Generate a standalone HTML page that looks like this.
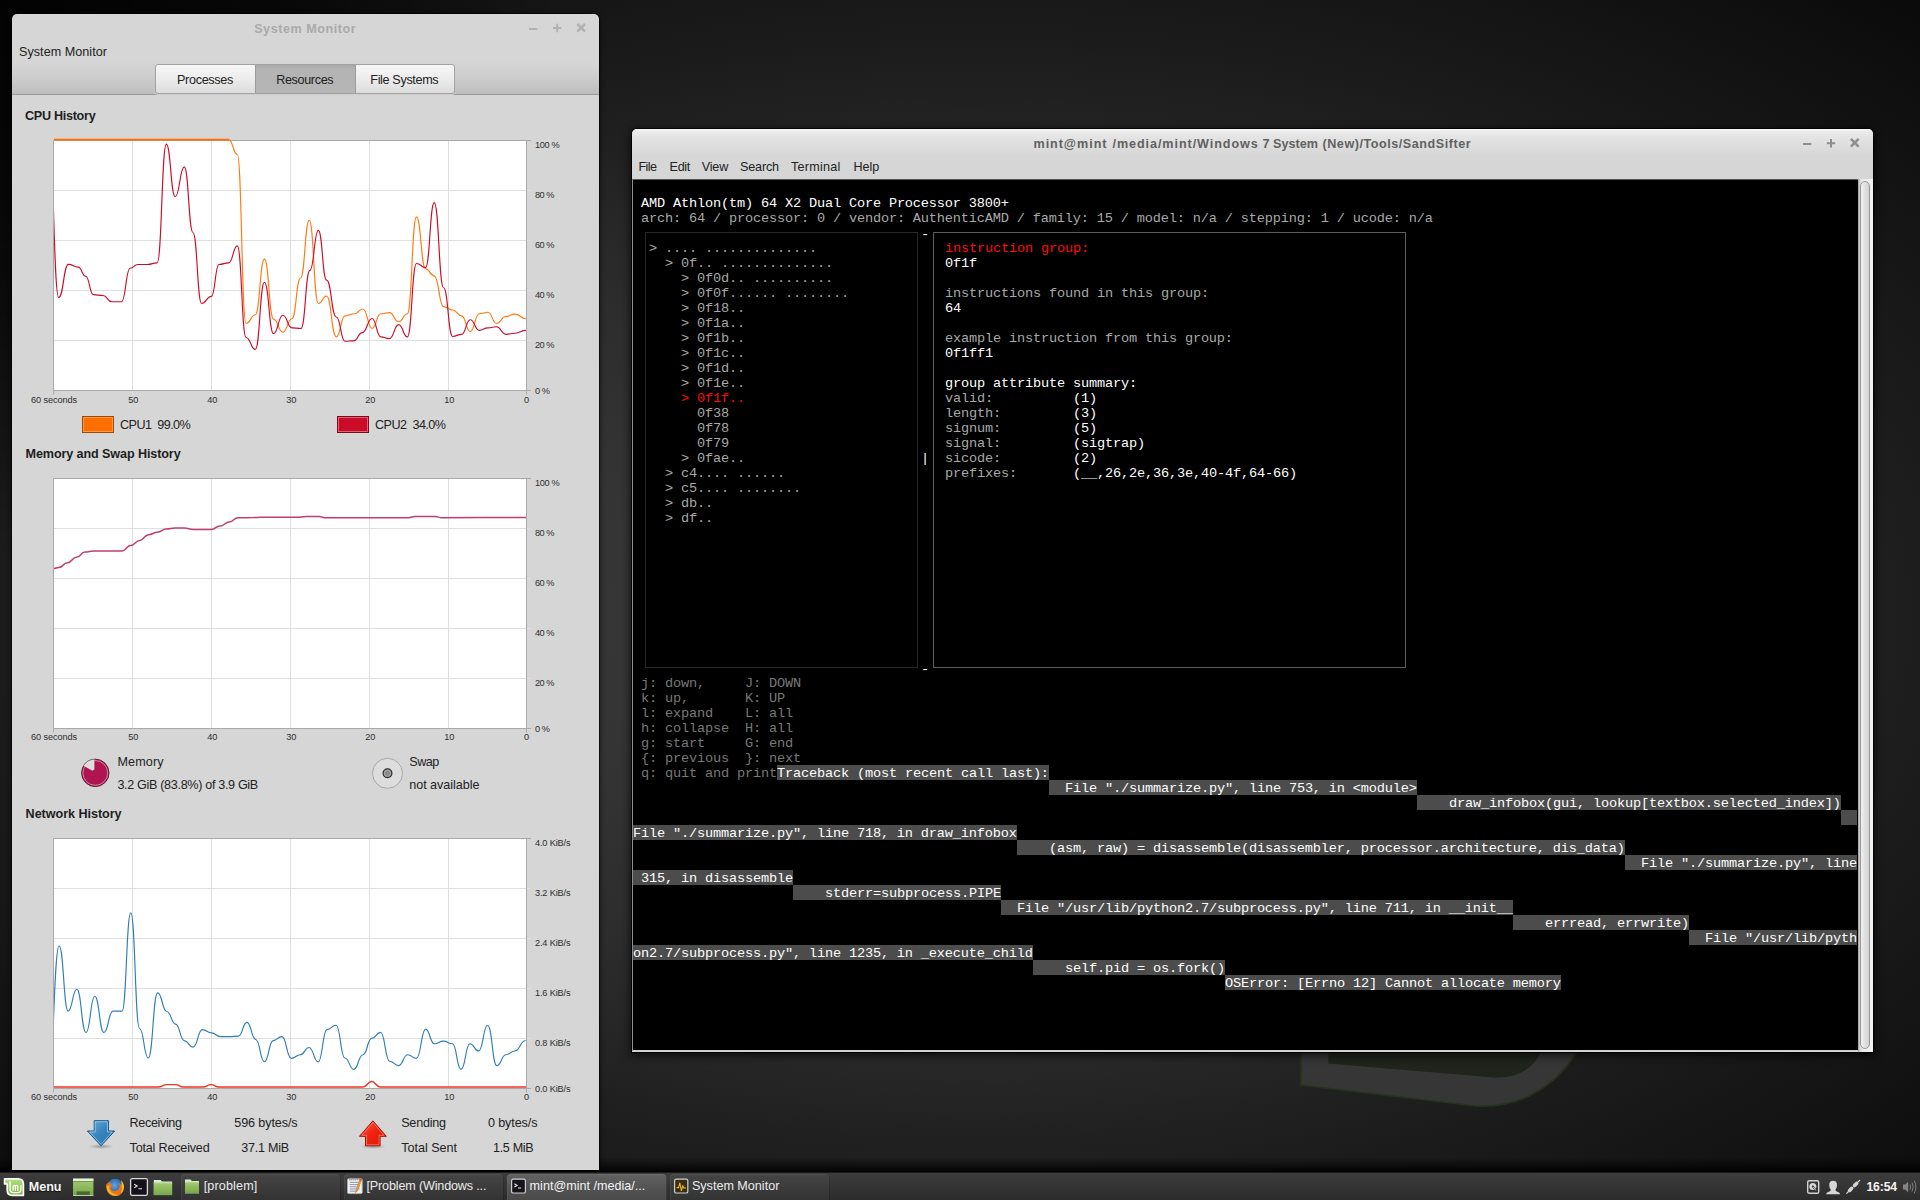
<!DOCTYPE html>
<html><head><meta charset="utf-8"><title>desktop</title>
<style>
html,body{margin:0;padding:0;}
body{width:1920px;height:1200px;overflow:hidden;position:relative;background:#111;font-family:"Liberation Sans",sans-serif;}
#bg{position:absolute;left:0;top:0;width:1920px;height:1200px;
 background: radial-gradient(circle 560px at 0px 0px, rgba(0,0,0,.75) 0%, rgba(0,0,0,.55) 50%, rgba(0,0,0,0) 100%), radial-gradient(ellipse 1580px 937px at 975px 620px, #3a3a3a 0.0%, #353535 24.8%, #2d2d2d 40.0%, #272727 48.0%, #202020 56.0%, #1a1a1a 64.0%, #151515 72.0%, #101010 80.0%, #0b0b0b 88.0%, #070707 93.6%, #030303 100.0%);}
.t{position:absolute;white-space:pre;line-height:20px;height:20px;font-family:"Liberation Sans",sans-serif;}
.abs{position:absolute;}
#sm{position:absolute;left:12px;top:14px;width:587px;height:1156px;background:#d6d6d6;border-radius:5px 5px 0 0;box-shadow:0 0 0 1px rgba(0,0,0,.55),0 1px 5px 1px rgba(0,0,0,.6);}
#tw{position:absolute;left:632px;top:129px;width:1241px;height:923px;background:#d6d6d6;border-radius:5px 5px 0 0;box-shadow:0 0 0 1px rgba(0,0,0,.8),0 2px 9px 2px rgba(0,0,0,.65);}
.m{position:absolute;white-space:pre;font-family:"Liberation Mono",monospace;font-size:13.6px;letter-spacing:-0.1614px;line-height:17px;height:15px;}
.hl{background:#4c4c4c;color:#fff;}
#panel{position:absolute;left:0;top:1172px;width:1920px;height:28px;background:linear-gradient(#3d3d3d,#343434 50%,#2c2c2c);border-top:1px solid #1a1a1a;box-sizing:border-box;}
.wb{position:absolute;top:1174px;height:26px;width:160px;border-radius:4px 4px 0 0;background:linear-gradient(#454545,#3a3a3a 60%,#333);box-shadow:inset 1px 0 0 rgba(255,255,255,.05),inset -1px 0 0 rgba(0,0,0,.25),inset 0 1px 0 rgba(255,255,255,.06);}
.wb.act{background:linear-gradient(#626262,#545454 50%,#4a4a4a);}
</style></head><body>
<div id="bg"></div>

<svg class="abs" style="left:1280px;top:1040px" width="320" height="90" viewBox="1280 1040 320 90">
<path d="M1301,1040 L1301,1085 L1476,1106 Q1540,1108.5 1577,1052 L1585,1040 Z" fill="#363636" stroke="#27331f" stroke-width="1.6"/>
<path d="M1328.4,1040 L1328.4,1063.4 L1494.4,1077.5 Q1528,1078.5 1541,1052 L1546,1040 Z" fill="#1f241c"/>
</svg>
<div class="abs" style="left:0;top:1158px;width:1920px;height:14px;background:linear-gradient(rgba(0,0,0,0),rgba(0,0,0,.55) 60%,rgba(0,0,0,.92))"></div>
<div id="sm">
<div class="abs" style="left:-12px;top:-14px;width:0;height:0">
<div class="abs" style="left:12px;top:62px;width:587px;height:32px;background:linear-gradient(#d6d6d6,#cfcfcf 40%,#bebebe)"></div>
<div class="abs" style="left:12px;top:94px;width:587px;height:1px;background:#9a9a9a"></div>
<span class="t" style="left:254.20px;top:19.00px;font-size:12.6px;color:#aaaaaa;font-weight:700;letter-spacing:0.535px;">System Monitor</span>
<svg class="abs" style="left:520px;top:18px" width="72" height="20" viewBox="520 18 72 20">
<g stroke="#b2b2b2" stroke-width="2" fill="none">
<path d="M529,29 H537.2"/>
<path d="M553,28 H561.4 M557.2,23.8 V32.2"/>
<path d="M577.3,24 L585,31.7 M585,24 L577.3,31.7" stroke-width="2.5"/>
</g></svg>
<span class="t" style="left:19.00px;top:42.00px;font-size:12.6px;color:#222;letter-spacing:0.034px;">System Monitor</span>
<div class="abs" style="left:155px;top:64px;width:300px;height:30px;box-sizing:border-box;border:1px solid #a3a3a3;border-radius:3px;background:linear-gradient(#f7f7f7,#ececec 50%,#dcdcdc);box-shadow:0 1px 0 rgba(255,255,255,.5)"></div>
<div class="abs" style="left:255px;top:65px;width:101px;height:28px;background:linear-gradient(#a9a9a9,#b3b3b3 4px,#b6b6b6);border-left:1px solid #9b9b9b;border-right:1px solid #9b9b9b;box-sizing:border-box"></div>
<span class="t" style="left:177.00px;top:70.00px;font-size:12.6px;color:#222;letter-spacing:-0.314px;">Processes</span>
<span class="t" style="left:276.20px;top:70.00px;font-size:12.6px;color:#222;letter-spacing:-0.347px;">Resources</span>
<span class="t" style="left:370.30px;top:70.00px;font-size:12.6px;color:#222;letter-spacing:-0.343px;">File Systems</span>
<span class="t" style="left:25.00px;top:106.00px;font-size:12.6px;color:#1e1e1e;font-weight:700;letter-spacing:-0.283px;">CPU History</span>
<svg class="abs" style="left:0;top:0" width="620" height="1172" viewBox="0 0 620 1172">
<defs><clipPath id="c1"><rect x="54" y="138" width="472.5" height="253"/></clipPath><clipPath id="c2"><rect x="54" y="478" width="472.5" height="251"/></clipPath><clipPath id="c3"><rect x="54" y="838" width="472.5" height="251"/></clipPath></defs>
<rect x="54" y="141.0" width="472.5" height="249.5" fill="#fff"/>
<path d="M132.5,140.5 V394.5" stroke="#dfdfdf" stroke-width="1"/>
<path d="M211.5,140.5 V394.5" stroke="#dfdfdf" stroke-width="1"/>
<path d="M290.5,140.5 V394.5" stroke="#dfdfdf" stroke-width="1"/>
<path d="M369.5,140.5 V394.5" stroke="#dfdfdf" stroke-width="1"/>
<path d="M448.5,140.5 V394.5" stroke="#dfdfdf" stroke-width="1"/>
<path d="M54,190.5 H531" stroke="#dfdfdf" stroke-width="1"/>
<path d="M54,240.5 H531" stroke="#dfdfdf" stroke-width="1"/>
<path d="M54,290.5 H531" stroke="#dfdfdf" stroke-width="1"/>
<path d="M54,340.5 H531" stroke="#dfdfdf" stroke-width="1"/>
<path d="M53.5,390.5 V140.5 H526.5" fill="none" stroke="#a9a9a9" stroke-width="1"/>
<path d="M526.5,140.5 V394.5 M53.5,390.5 V394.5 M53.5,390.5 H531 M526.5,140.5 H531" fill="none" stroke="#a9a9a9" stroke-width="1"/>
<g clip-path="url(#c1)" fill="none" stroke-width="1.15" stroke-linejoin="round"><path d="M53.90,139.55 C141.30,139.55 141.30,139.55 228.70,139.55 C233.03,139.55 233.03,154.49 237.36,154.49 C241.70,154.49 241.70,323.45 246.03,323.45 C250.69,323.45 250.69,314.78 255.34,314.78 C259.89,314.78 259.89,259.12 264.44,259.12 C268.99,259.12 268.99,319.12 273.54,319.12 C278.19,319.12 278.19,332.11 282.85,332.11 C287.38,332.11 287.38,318.71 291.92,318.71 C296.25,318.71 296.25,277.98 300.58,277.98 C304.91,277.98 304.91,220.14 309.25,220.14 C313.80,220.14 313.80,303.54 318.34,303.54 C322.46,303.54 322.46,295.96 326.58,295.96 C331.45,295.96 331.45,336.91 336.33,336.91 C340.66,336.91 340.66,315.89 344.99,315.89 C349.65,315.89 349.65,313.73 354.31,313.73 C358.64,313.73 358.64,308.96 362.97,308.96 C367.52,308.96 367.52,328.46 372.07,328.46 C376.40,328.46 376.40,313.73 380.74,313.73 C385.07,313.73 385.07,312.64 389.40,312.64 C394.06,312.64 394.06,321.74 398.72,321.74 C403.05,321.74 403.05,313.73 407.38,313.73 C411.93,313.73 411.93,216.89 416.48,216.89 C421.03,216.89 421.03,268.88 425.58,268.88 C429.91,268.88 429.91,275.81 434.25,275.81 C438.90,275.81 438.90,306.58 443.56,306.58 C448.11,306.58 448.11,310.04 452.66,310.04 C457.10,310.04 457.10,315.89 461.54,315.89 C465.88,315.89 465.88,331.49 470.21,331.49 C474.76,331.49 474.76,313.73 479.31,313.73 C483.64,313.73 483.64,312.21 487.97,312.21 C492.31,312.21 492.31,323.47 496.64,323.47 C501.19,323.47 501.19,316.54 505.74,316.54 C510.39,316.54 510.39,314.16 515.05,314.16 C520.47,314.16 520.47,318.71 525.88,318.71" stroke="#ff7a10"/><path d="M48.27,122.00 C53.47,122.00 53.47,297.45 58.66,297.45 C63.54,297.45 63.54,264.31 68.41,264.31 C73.29,264.31 73.29,267.13 78.16,267.13 C81.95,267.13 81.95,276.23 85.74,276.23 C89.53,276.23 89.53,294.64 93.32,294.64 C98.19,294.64 98.19,295.51 103.07,295.51 C107.40,295.51 107.40,301.79 111.73,301.79 C116.61,301.79 116.61,301.79 121.48,301.79 C125.81,301.79 125.81,268.21 130.14,268.21 C133.94,268.21 133.94,264.53 137.73,264.53 C142.60,264.53 142.60,264.53 147.47,264.53 C152.35,264.53 152.35,262.80 157.22,262.80 C161.77,262.80 161.77,144.10 166.32,144.10 C170.76,144.10 170.76,196.73 175.20,196.73 C179.75,196.73 179.75,166.84 184.30,166.84 C188.63,166.84 188.63,232.47 192.96,232.47 C197.29,232.47 197.29,303.52 201.62,303.52 C206.50,303.52 206.50,296.37 211.37,296.37 C215.16,296.37 215.16,264.53 218.95,264.53 C223.83,264.53 223.83,262.80 228.70,262.80 C233.03,262.80 233.03,245.90 237.36,245.90 C241.70,245.90 241.70,337.53 246.03,337.53 C250.69,337.53 250.69,349.44 255.34,349.44 C259.89,349.44 259.89,282.29 264.44,282.29 C268.99,282.29 268.99,333.63 273.54,333.63 C278.19,333.63 278.19,315.22 282.85,315.22 C287.38,315.22 287.38,327.81 291.92,327.81 C296.46,327.81 296.46,328.46 301.01,328.46 C305.45,328.46 305.45,270.40 309.90,270.40 C314.12,270.40 314.12,230.32 318.34,230.32 C322.46,230.32 322.46,280.15 326.58,280.15 C331.45,280.15 331.45,316.98 336.33,316.98 C340.66,316.98 340.66,341.24 344.99,341.24 C349.32,341.24 349.32,340.81 353.66,340.81 C357.99,340.81 357.99,332.57 362.32,332.57 C367.20,332.57 367.20,318.49 372.07,318.49 C376.40,318.49 376.40,336.91 380.74,336.91 C385.07,336.91 385.07,338.64 389.40,338.64 C394.06,338.64 394.06,324.56 398.72,324.56 C403.05,324.56 403.05,336.91 407.38,336.91 C411.93,336.91 411.93,263.47 416.48,263.47 C421.03,263.47 421.03,267.58 425.58,267.58 C429.91,267.58 429.91,202.59 434.25,202.59 C438.90,202.59 438.90,287.73 443.56,287.73 C448.11,287.73 448.11,336.47 452.66,336.47 C457.10,336.47 457.10,334.31 461.54,334.31 C465.88,334.31 465.88,319.79 470.21,319.79 C474.76,319.79 474.76,330.41 479.31,330.41 C483.64,330.41 483.64,327.81 487.97,327.81 C492.31,327.81 492.31,326.72 496.64,326.72 C501.19,326.72 501.19,334.31 505.74,334.31 C510.39,334.31 510.39,333.22 515.05,333.22 C520.47,333.22 520.47,330.41 525.88,330.41" stroke="#cb0c29"/><path d="M54,139.6 H229" stroke="#ff6e00" stroke-width="1.7"/></g>
<rect x="54" y="479.0" width="472.5" height="249.5" fill="#fff"/>
<path d="M132.5,478.5 V732.5" stroke="#dfdfdf" stroke-width="1"/>
<path d="M211.5,478.5 V732.5" stroke="#dfdfdf" stroke-width="1"/>
<path d="M290.5,478.5 V732.5" stroke="#dfdfdf" stroke-width="1"/>
<path d="M369.5,478.5 V732.5" stroke="#dfdfdf" stroke-width="1"/>
<path d="M448.5,478.5 V732.5" stroke="#dfdfdf" stroke-width="1"/>
<path d="M54,528.5 H531" stroke="#dfdfdf" stroke-width="1"/>
<path d="M54,578.5 H531" stroke="#dfdfdf" stroke-width="1"/>
<path d="M54,628.5 H531" stroke="#dfdfdf" stroke-width="1"/>
<path d="M54,678.5 H531" stroke="#dfdfdf" stroke-width="1"/>
<path d="M53.5,728.5 V478.5 H526.5" fill="none" stroke="#a9a9a9" stroke-width="1"/>
<path d="M526.5,478.5 V732.5 M53.5,728.5 V732.5 M53.5,728.5 H531 M526.5,478.5 H531" fill="none" stroke="#a9a9a9" stroke-width="1"/>
<g clip-path="url(#c2)" fill="none" stroke-width="1.5"><path d="M53.50,568.60 C56.12,568.60 56.12,567.50 58.75,567.50 C63.12,567.50 63.12,562.75 67.50,562.75 C72.00,562.75 72.00,557.25 76.50,557.25 C80.75,557.25 80.75,552.10 85.00,552.10 C89.38,552.10 89.38,551.00 93.75,551.00 C98.75,551.00 98.75,551.00 103.75,551.00 C108.12,551.00 108.12,551.00 112.50,551.00 C117.20,551.00 117.20,551.00 121.90,551.00 C126.25,551.00 126.25,545.40 130.60,545.40 C135.18,545.40 135.18,540.40 139.75,540.40 C144.12,540.40 144.12,534.75 148.50,534.75 C153.00,534.75 153.00,532.25 157.50,532.25 C161.88,532.25 161.88,529.10 166.25,529.10 C170.62,529.10 170.62,528.10 175.00,528.10 C179.70,528.10 179.70,528.10 184.40,528.10 C188.75,528.10 188.75,529.40 193.10,529.40 C197.80,529.40 197.80,529.40 202.50,529.40 C206.88,529.40 206.88,529.40 211.25,529.40 C215.62,529.40 215.62,526.00 220.00,526.00 C224.70,526.00 224.70,521.90 229.40,521.90 C233.75,521.90 233.75,517.75 238.10,517.75 C242.80,517.75 242.80,517.75 247.50,517.75 C251.88,517.75 251.88,517.50 256.25,517.50 C260.62,517.50 260.62,517.20 265.00,517.20 C281.00,517.20 281.00,517.20 297.00,517.20 C301.50,517.20 301.50,516.60 306.00,516.60 C312.50,516.60 312.50,516.60 319.00,516.60 C322.50,516.60 322.50,517.80 326.00,517.80 C366.50,517.80 366.50,517.80 407.00,517.80 C411.00,517.80 411.00,516.60 415.00,516.60 C425.00,516.60 425.00,516.60 435.00,516.60 C438.50,516.60 438.50,517.70 442.00,517.70 C484.00,517.70 484.00,517.50 526.00,517.50" stroke="#c03e72"/></g>
<rect x="54" y="839.0" width="472.5" height="249.5" fill="#fff"/>
<path d="M132.5,838.5 V1092.5" stroke="#dfdfdf" stroke-width="1"/>
<path d="M211.5,838.5 V1092.5" stroke="#dfdfdf" stroke-width="1"/>
<path d="M290.5,838.5 V1092.5" stroke="#dfdfdf" stroke-width="1"/>
<path d="M369.5,838.5 V1092.5" stroke="#dfdfdf" stroke-width="1"/>
<path d="M448.5,838.5 V1092.5" stroke="#dfdfdf" stroke-width="1"/>
<path d="M54,888.5 H531" stroke="#dfdfdf" stroke-width="1"/>
<path d="M54,938.5 H531" stroke="#dfdfdf" stroke-width="1"/>
<path d="M54,988.5 H531" stroke="#dfdfdf" stroke-width="1"/>
<path d="M54,1038.5 H531" stroke="#dfdfdf" stroke-width="1"/>
<path d="M53.5,1088.5 V838.5 H526.5" fill="none" stroke="#a9a9a9" stroke-width="1"/>
<path d="M526.5,838.5 V1092.5 M53.5,1088.5 V1092.5 M53.5,1088.5 H531 M526.5,838.5 H531" fill="none" stroke="#a9a9a9" stroke-width="1"/>
<g clip-path="url(#c3)" fill="none" stroke-width="1.15"><path d="M47.82,1094.06 C53.49,1094.06 53.49,945.99 59.17,945.99 C63.65,945.99 63.65,1011.07 68.13,1011.07 C72.49,1011.07 72.49,989.23 76.86,989.23 C81.45,989.23 81.45,1032.47 86.03,1032.47 C90.40,1032.47 90.40,996.22 94.77,996.22 C99.35,996.22 99.35,1032.47 103.94,1032.47 C108.42,1032.47 108.42,1011.07 112.89,1011.07 C117.48,1011.07 117.48,1011.07 122.07,1011.07 C126.43,1011.07 126.43,912.80 130.80,912.80 C135.17,912.80 135.17,1028.54 139.54,1028.54 C143.90,1028.54 143.90,1058.02 148.27,1058.02 C152.97,1058.02 152.97,992.95 157.66,992.95 C162.25,992.95 162.25,1011.51 166.83,1011.51 C171.20,1011.51 171.20,1024.17 175.57,1024.17 C179.94,1024.17 179.94,1040.55 184.30,1040.55 C188.67,1040.55 188.67,1047.10 193.04,1047.10 C197.73,1047.10 197.73,1029.63 202.43,1029.63 C207.02,1029.63 207.02,1032.91 211.60,1032.91 C215.97,1032.91 215.97,1036.62 220.34,1036.62 C224.92,1036.62 224.92,1036.62 229.51,1036.62 C233.88,1036.62 233.88,1036.19 238.24,1036.19 C242.61,1036.19 242.61,1022.43 246.98,1022.43 C251.35,1022.43 251.35,1039.46 255.71,1039.46 C260.08,1039.46 260.08,1061.74 264.45,1061.74 C268.82,1061.74 268.82,1040.55 273.18,1040.55 C277.55,1040.55 277.55,1036.62 281.92,1036.62 C286.64,1036.62 286.64,1058.42 291.35,1058.42 C295.83,1058.42 295.83,1054.71 300.31,1054.71 C304.67,1054.71 304.67,1047.50 309.04,1047.50 C313.62,1047.50 313.62,1061.91 318.21,1061.91 C322.58,1061.91 322.58,1029.60 326.94,1029.60 C331.53,1029.60 331.53,1025.23 336.11,1025.23 C340.48,1025.23 340.48,1057.98 344.85,1057.98 C349.32,1057.98 349.32,1069.34 353.80,1069.34 C358.38,1069.34 358.38,1054.71 362.97,1054.71 C367.34,1054.71 367.34,1038.33 371.70,1038.33 C376.18,1038.33 376.18,1032.44 380.66,1032.44 C385.13,1032.44 385.13,1061.26 389.61,1061.26 C394.08,1061.26 394.08,1065.62 398.56,1065.62 C403.14,1065.62 403.14,1054.71 407.73,1054.71 C412.10,1054.71 412.10,1058.42 416.46,1058.42 C421.05,1058.42 421.05,1029.16 425.63,1029.16 C430.00,1029.16 430.00,1043.79 434.37,1043.79 C438.84,1043.79 438.84,1041.17 443.32,1041.17 C447.90,1041.17 447.90,1043.79 452.49,1043.79 C456.75,1043.79 456.75,1069.34 461.00,1069.34 C465.48,1069.34 465.48,1043.79 469.96,1043.79 C474.32,1043.79 474.32,1051.00 478.69,1051.00 C483.17,1051.00 483.17,1025.23 487.64,1025.23 C492.23,1025.23 492.23,1065.62 496.81,1065.62 C501.40,1065.62 501.40,1054.71 505.98,1054.71 C510.35,1054.71 510.35,1051.00 514.72,1051.00 C520.17,1051.00 520.17,1040.52 525.63,1040.52" stroke="#2e7db3"/><path d="M53.49,1087.07 C105.80,1087.07 105.80,1087.07 158.10,1087.07 C162.47,1087.07 162.47,1084.67 166.83,1084.67 C171.20,1084.67 171.20,1084.67 175.57,1084.67 C179.39,1084.67 179.39,1087.07 183.21,1087.07 C193.04,1087.07 193.04,1087.07 202.87,1087.07 C207.02,1087.07 207.02,1084.67 211.16,1084.67 C214.88,1084.67 214.88,1087.07 218.59,1087.07 C250.25,1087.07 250.25,1087.07 281.92,1087.07 C322.44,1087.07 322.44,1087.02 362.97,1087.02 C367.34,1087.02 367.34,1081.56 371.70,1081.56 C375.85,1081.56 375.85,1087.02 380.00,1087.02 C453.14,1087.02 453.14,1087.02 526.29,1087.02" stroke="#ee3320" stroke-width="1.4"/></g>
<rect x="82.5" y="416.5" width="31" height="16" fill="#ff6e00" stroke="#9c4a08"/><rect x="83.5" y="417.5" width="29" height="14" fill="none" stroke="#ffa45c" stroke-opacity=".8"/>
<rect x="337.5" y="416.5" width="31" height="16" fill="#cb0c29" stroke="#7a0a1c"/><rect x="338.5" y="417.5" width="29" height="14" fill="none" stroke="#e8778a" stroke-opacity=".8"/>
<g>
<circle cx="95.3" cy="772.9" r="13.7" fill="#b01550" stroke="#4d2534" stroke-width="1"/>
<circle cx="95.3" cy="772.9" r="12.4" fill="none" stroke="#e39ab6" stroke-width="1" opacity=".8"/>
<path d="M94.4,759.3 L94.4,769.4 L92.4,770.7 L83.5,765.7 A13.7,13.7 0 0 1 94.4,759.3 Z" fill="#dedede"/>
<path d="M94.4,759.2 A13.7,13.7 0 0 0 83.3,765.9" fill="none" stroke="#7d7d7d" stroke-width="1"/>
</g>
<g><circle cx="387.5" cy="773.3" r="15" fill="#dddddd" stroke="#a8a8a8" stroke-width="1"/>
<circle cx="387.5" cy="773.3" r="4.4" fill="#8a8a8a" stroke="#2c2c2c" stroke-width="1.2"/>
<circle cx="387.5" cy="773.3" r="3.1" fill="none" stroke="#b5b5b5" stroke-width=".8"/></g>
<defs>
<linearGradient id="gb" x1="0" y1="0" x2="1" y2="1"><stop offset="0" stop-color="#6aaede"/><stop offset=".5" stop-color="#3584bd"/><stop offset="1" stop-color="#2a70a6"/></linearGradient>
<linearGradient id="gr" x1="0" y1="0" x2="1" y2="1"><stop offset="0" stop-color="#ff5a48"/><stop offset=".5" stop-color="#f0220f"/><stop offset="1" stop-color="#e01808"/></linearGradient>
<radialGradient id="sh"><stop offset="0" stop-color="#000" stop-opacity=".28"/><stop offset="1" stop-color="#000" stop-opacity="0"/></radialGradient>
</defs>
<ellipse cx="101" cy="1146.5" rx="13" ry="2.6" fill="url(#sh)"/>
<path d="M94.2,1120.7 H108.5 V1131 H114.6 L101.05,1145.8 L87.4,1131 H94.2 Z" fill="url(#gb)" stroke="#1a5687" stroke-width="1" stroke-linejoin="round"/>
<path d="M95.2,1121.7 H107.5 V1132 H112.3 L101.05,1144.3 L89.7,1132 H95.2 Z" fill="none" stroke="#a8d4f2" stroke-width="1" stroke-opacity=".7"/>
<ellipse cx="373" cy="1146.5" rx="13" ry="2.6" fill="url(#sh)"/>
<path d="M372.9,1120.8 L386.3,1136.3 H380.1 V1145.8 H365.5 V1136.3 H359.5 Z" fill="url(#gr)" stroke="#9c1206" stroke-width="1" stroke-linejoin="round"/>
<path d="M372.9,1122.4 L384,1135.3 H379.1 V1144.8 H366.5 V1135.3 H361.8 Z" fill="none" stroke="#ff9a8c" stroke-width="1" stroke-opacity=".6"/>

</svg>
<span class="t" style="left:31.00px;top:390.00px;font-size:9.2px;color:#2e2e2e;letter-spacing:-0.106px;">60 seconds</span>
<span class="t" style="left:128.30px;top:390.00px;font-size:9.2px;color:#2e2e2e;letter-spacing:-0.217px;">50</span>
<span class="t" style="left:207.30px;top:390.00px;font-size:9.2px;color:#2e2e2e;letter-spacing:-0.217px;">40</span>
<span class="t" style="left:286.30px;top:390.00px;font-size:9.2px;color:#2e2e2e;letter-spacing:-0.217px;">30</span>
<span class="t" style="left:365.30px;top:390.00px;font-size:9.2px;color:#2e2e2e;letter-spacing:-0.217px;">20</span>
<span class="t" style="left:444.30px;top:390.00px;font-size:9.2px;color:#2e2e2e;letter-spacing:-0.217px;">10</span>
<span class="t" style="left:523.88px;top:390.00px;font-size:9.2px;color:#2e2e2e;">0</span>
<span class="t" style="left:535.00px;top:135.00px;font-size:9.2px;color:#2e2e2e;letter-spacing:-0.317px;">100 %</span>
<span class="t" style="left:535.00px;top:185.00px;font-size:9.2px;color:#2e2e2e;letter-spacing:-0.492px;">80 %</span>
<span class="t" style="left:535.00px;top:235.00px;font-size:9.2px;color:#2e2e2e;letter-spacing:-0.492px;">60 %</span>
<span class="t" style="left:535.00px;top:285.00px;font-size:9.2px;color:#2e2e2e;letter-spacing:-0.492px;">40 %</span>
<span class="t" style="left:535.00px;top:335.00px;font-size:9.2px;color:#2e2e2e;letter-spacing:-0.492px;">20 %</span>
<span class="t" style="left:535.00px;top:381.00px;font-size:9.2px;color:#2e2e2e;letter-spacing:-0.518px;">0 %</span>
<span class="t" style="left:31.00px;top:727.00px;font-size:9.2px;color:#2e2e2e;letter-spacing:-0.106px;">60 seconds</span>
<span class="t" style="left:128.30px;top:727.00px;font-size:9.2px;color:#2e2e2e;letter-spacing:-0.217px;">50</span>
<span class="t" style="left:207.30px;top:727.00px;font-size:9.2px;color:#2e2e2e;letter-spacing:-0.217px;">40</span>
<span class="t" style="left:286.30px;top:727.00px;font-size:9.2px;color:#2e2e2e;letter-spacing:-0.217px;">30</span>
<span class="t" style="left:365.30px;top:727.00px;font-size:9.2px;color:#2e2e2e;letter-spacing:-0.217px;">20</span>
<span class="t" style="left:444.30px;top:727.00px;font-size:9.2px;color:#2e2e2e;letter-spacing:-0.217px;">10</span>
<span class="t" style="left:523.88px;top:727.00px;font-size:9.2px;color:#2e2e2e;">0</span>
<span class="t" style="left:535.00px;top:473.00px;font-size:9.2px;color:#2e2e2e;letter-spacing:-0.317px;">100 %</span>
<span class="t" style="left:535.00px;top:523.00px;font-size:9.2px;color:#2e2e2e;letter-spacing:-0.492px;">80 %</span>
<span class="t" style="left:535.00px;top:573.00px;font-size:9.2px;color:#2e2e2e;letter-spacing:-0.492px;">60 %</span>
<span class="t" style="left:535.00px;top:623.00px;font-size:9.2px;color:#2e2e2e;letter-spacing:-0.492px;">40 %</span>
<span class="t" style="left:535.00px;top:673.00px;font-size:9.2px;color:#2e2e2e;letter-spacing:-0.492px;">20 %</span>
<span class="t" style="left:535.00px;top:719.00px;font-size:9.2px;color:#2e2e2e;letter-spacing:-0.518px;">0 %</span>
<span class="t" style="left:31.00px;top:1087.00px;font-size:9.2px;color:#2e2e2e;letter-spacing:-0.106px;">60 seconds</span>
<span class="t" style="left:128.30px;top:1087.00px;font-size:9.2px;color:#2e2e2e;letter-spacing:-0.217px;">50</span>
<span class="t" style="left:207.30px;top:1087.00px;font-size:9.2px;color:#2e2e2e;letter-spacing:-0.217px;">40</span>
<span class="t" style="left:286.30px;top:1087.00px;font-size:9.2px;color:#2e2e2e;letter-spacing:-0.217px;">30</span>
<span class="t" style="left:365.30px;top:1087.00px;font-size:9.2px;color:#2e2e2e;letter-spacing:-0.217px;">20</span>
<span class="t" style="left:444.30px;top:1087.00px;font-size:9.2px;color:#2e2e2e;letter-spacing:-0.217px;">10</span>
<span class="t" style="left:523.88px;top:1087.00px;font-size:9.2px;color:#2e2e2e;">0</span>
<span class="t" style="left:535.00px;top:833.00px;font-size:9.2px;color:#2e2e2e;letter-spacing:-0.146px;">4.0 KiB/s</span>
<span class="t" style="left:535.00px;top:883.00px;font-size:9.2px;color:#2e2e2e;letter-spacing:-0.146px;">3.2 KiB/s</span>
<span class="t" style="left:535.00px;top:933.00px;font-size:9.2px;color:#2e2e2e;letter-spacing:-0.146px;">2.4 KiB/s</span>
<span class="t" style="left:535.00px;top:983.00px;font-size:9.2px;color:#2e2e2e;letter-spacing:-0.146px;">1.6 KiB/s</span>
<span class="t" style="left:535.00px;top:1033.00px;font-size:9.2px;color:#2e2e2e;letter-spacing:-0.146px;">0.8 KiB/s</span>
<span class="t" style="left:535.00px;top:1079.00px;font-size:9.2px;color:#2e2e2e;letter-spacing:-0.146px;">0.0 KiB/s</span>
<span class="t" style="left:120.00px;top:415.00px;font-size:12.6px;color:#222;letter-spacing:-0.553px;">CPU1  99.0%</span>
<span class="t" style="left:375.00px;top:415.00px;font-size:12.6px;color:#222;letter-spacing:-0.531px;">CPU2  34.0%</span>
<span class="t" style="left:25.60px;top:444.00px;font-size:12.6px;color:#1e1e1e;font-weight:700;letter-spacing:-0.110px;">Memory and Swap History</span>
<span class="t" style="left:117.40px;top:752.00px;font-size:12.6px;color:#222;letter-spacing:0.133px;">Memory</span>
<span class="t" style="left:117.40px;top:775.00px;font-size:12.6px;color:#222;letter-spacing:-0.330px;">3.2 GiB (83.8%) of 3.9 GiB</span>
<span class="t" style="left:409.20px;top:752.00px;font-size:12.6px;color:#222;letter-spacing:-0.455px;">Swap</span>
<span class="t" style="left:409.20px;top:775.00px;font-size:12.6px;color:#222;letter-spacing:-0.035px;">not available</span>
<span class="t" style="left:25.60px;top:804.00px;font-size:12.6px;color:#1e1e1e;font-weight:700;letter-spacing:-0.042px;">Network History</span>
<span class="t" style="left:129.60px;top:1113.00px;font-size:12.6px;color:#222;letter-spacing:-0.359px;">Receiving</span>
<span class="t" style="left:234.25px;top:1113.00px;font-size:12.6px;color:#222;letter-spacing:-0.108px;">596 bytes/s</span>
<span class="t" style="left:129.60px;top:1138.00px;font-size:12.6px;color:#222;letter-spacing:-0.196px;">Total Received</span>
<span class="t" style="left:241.30px;top:1138.00px;font-size:12.6px;color:#222;letter-spacing:-0.253px;">37.1 MiB</span>
<span class="t" style="left:401.20px;top:1113.00px;font-size:12.6px;color:#222;letter-spacing:-0.220px;">Sending</span>
<span class="t" style="left:487.90px;top:1113.00px;font-size:12.6px;color:#222;letter-spacing:-0.103px;">0 bytes/s</span>
<span class="t" style="left:401.20px;top:1138.00px;font-size:12.6px;color:#222;letter-spacing:-0.014px;">Total Sent</span>
<span class="t" style="left:493.00px;top:1138.00px;font-size:12.6px;color:#222;letter-spacing:-0.331px;">1.5 MiB</span>
</div></div>
<div id="tw"><div class="abs" style="left:-632px;top:-129px;width:0;height:0">
<div class="abs" style="left:632px;top:129px;width:1241px;height:28px;border-radius:5px 5px 0 0;background:linear-gradient(#fbfbfb 0,#ececec 2px,#e4e4e4 8px,#d6d6d6 27px)"></div>
<span class="t" style="left:1033.50px;top:134.00px;font-size:12.6px;color:#616161;font-weight:700;letter-spacing:0.947px;">mint@mint</span>
<span class="t" style="left:1112.50px;top:134.00px;font-size:12.6px;color:#616161;font-weight:700;letter-spacing:0.924px;">/media/mint/Windows</span>
<span class="t" style="left:1262.50px;top:134.00px;font-size:12.6px;color:#616161;font-weight:700;">7</span>
<span class="t" style="left:1273.10px;top:134.00px;font-size:12.6px;color:#616161;font-weight:700;letter-spacing:0.029px;">System</span>
<span class="t" style="left:1322.50px;top:134.00px;font-size:12.6px;color:#616161;font-weight:700;letter-spacing:0.535px;">(New)/Tools/SandSifter</span>
<svg class="abs" style="left:1796px;top:133px" width="72" height="20" viewBox="1796 133 72 20">
<g stroke="#8e8e8e" stroke-width="2" fill="none">
<path d="M1803,144 H1811.3"/>
<path d="M1826.8,143.3 H1835.2 M1831,139.1 V147.5"/>
<path d="M1850.9,138.9 L1858.6,146.6 M1858.6,138.9 L1850.9,146.6" stroke-width="2.5"/>
</g></svg>
<span class="t" style="left:638.50px;top:157.00px;font-size:12.6px;color:#222;letter-spacing:-0.601px;">File</span>
<span class="t" style="left:669.60px;top:157.00px;font-size:12.6px;color:#222;letter-spacing:-0.328px;">Edit</span>
<span class="t" style="left:701.70px;top:157.00px;font-size:12.6px;color:#222;letter-spacing:-0.171px;">View</span>
<span class="t" style="left:740.00px;top:157.00px;font-size:12.6px;color:#222;letter-spacing:-0.170px;">Search</span>
<span class="t" style="left:791.10px;top:157.00px;font-size:12.6px;color:#222;letter-spacing:0.223px;">Terminal</span>
<span class="t" style="left:853.40px;top:157.00px;font-size:12.6px;color:#222;letter-spacing:-0.053px;">Help</span>
<div class="abs" style="left:632px;top:179px;width:1226px;height:872px;background:#000;border-left:1px solid #8c8c8c;border-top:1px solid #555;border-bottom:1px solid #cfcfcf;box-sizing:border-box"></div>
<div class="abs" style="left:1858px;top:179px;width:15px;height:873px;background:linear-gradient(to right,#9a9a9a,#dcdcdc 2px,#ececec 5px,#f2f2f2)"></div>
<div class="abs" style="left:1860px;top:181px;width:10px;height:868px;box-sizing:border-box;border:1px solid #989898;border-radius:5px;background:linear-gradient(to right,#f0f0f0,#dedede 60%,#d2d2d2)"></div>
<span class="m " style="left:641px;top:195px;color:#ffffff">AMD Athlon(tm) 64 X2 Dual Core Processor 3800+</span>
<span class="m " style="left:641px;top:210px;color:#a8a8a8">arch: 64 / processor: 0 / vendor: AuthenticAMD / family: 15 / model: n/a / stepping: 1 / ucode: n/a</span>
<div class="abs" style="left:645px;top:232px;width:273px;height:436px;box-sizing:border-box;border:1px solid #282828"></div>
<div class="abs" style="left:933px;top:232px;width:473px;height:436px;box-sizing:border-box;border:1px solid #5c5c5c"></div>
<span class="m " style="left:921px;top:226px;color:#ffffff">-</span>
<span class="m " style="left:921px;top:661px;color:#ffffff">-</span>
<span class="m " style="left:921px;top:450px;color:#ffffff">|</span>
<span class="m " style="left:649px;top:240px;color:#a8a8a8">&gt; .... ..............</span>
<span class="m " style="left:665px;top:255px;color:#a8a8a8">&gt; 0f.. ..............</span>
<span class="m " style="left:681px;top:270px;color:#a8a8a8">&gt; 0f0d.. ..........</span>
<span class="m " style="left:681px;top:285px;color:#a8a8a8">&gt; 0f0f...... ........</span>
<span class="m " style="left:681px;top:300px;color:#a8a8a8">&gt; 0f18..</span>
<span class="m " style="left:681px;top:315px;color:#a8a8a8">&gt; 0f1a..</span>
<span class="m " style="left:681px;top:330px;color:#a8a8a8">&gt; 0f1b..</span>
<span class="m " style="left:681px;top:345px;color:#a8a8a8">&gt; 0f1c..</span>
<span class="m " style="left:681px;top:360px;color:#a8a8a8">&gt; 0f1d..</span>
<span class="m " style="left:681px;top:375px;color:#a8a8a8">&gt; 0f1e..</span>
<span class="m " style="left:697px;top:405px;color:#a8a8a8">0f38</span>
<span class="m " style="left:697px;top:420px;color:#a8a8a8">0f78</span>
<span class="m " style="left:697px;top:435px;color:#a8a8a8">0f79</span>
<span class="m " style="left:681px;top:450px;color:#a8a8a8">&gt; 0fae..</span>
<span class="m " style="left:665px;top:465px;color:#a8a8a8">&gt; c4.... ......</span>
<span class="m " style="left:665px;top:480px;color:#a8a8a8">&gt; c5.... ........</span>
<span class="m " style="left:665px;top:495px;color:#a8a8a8">&gt; db..</span>
<span class="m " style="left:665px;top:510px;color:#a8a8a8">&gt; df..</span>
<span class="m " style="left:681px;top:390px;color:#ff0a0a">&gt; 0f1f..</span>
<span class="m " style="left:945px;top:240px;color:#ff0a0a">instruction group:</span>
<span class="m " style="left:945px;top:255px;color:#ffffff">0f1f</span>
<span class="m " style="left:945px;top:285px;color:#a8a8a8">instructions found in this group:</span>
<span class="m " style="left:945px;top:300px;color:#ffffff">64</span>
<span class="m " style="left:945px;top:330px;color:#a8a8a8">example instruction from this group:</span>
<span class="m " style="left:945px;top:345px;color:#ffffff">0f1ff1</span>
<span class="m " style="left:945px;top:375px;color:#ffffff">group attribute summary:</span>
<span class="m " style="left:945px;top:390px;color:#a8a8a8">valid:</span>
<span class="m " style="left:1073px;top:390px;color:#ffffff">(1)</span>
<span class="m " style="left:945px;top:405px;color:#a8a8a8">length:</span>
<span class="m " style="left:1073px;top:405px;color:#ffffff">(3)</span>
<span class="m " style="left:945px;top:420px;color:#a8a8a8">signum:</span>
<span class="m " style="left:1073px;top:420px;color:#ffffff">(5)</span>
<span class="m " style="left:945px;top:435px;color:#a8a8a8">signal:</span>
<span class="m " style="left:1073px;top:435px;color:#ffffff">(sigtrap)</span>
<span class="m " style="left:945px;top:450px;color:#a8a8a8">sicode:</span>
<span class="m " style="left:1073px;top:450px;color:#ffffff">(2)</span>
<span class="m " style="left:945px;top:465px;color:#a8a8a8">prefixes:</span>
<span class="m " style="left:1073px;top:465px;color:#ffffff">(__,26,2e,36,3e,40-4f,64-66)</span>
<span class="m " style="left:641px;top:675px;color:#787878">j: down,     J: DOWN</span>
<span class="m " style="left:641px;top:690px;color:#787878">k: up,       K: UP</span>
<span class="m " style="left:641px;top:705px;color:#787878">l: expand    L: all</span>
<span class="m " style="left:641px;top:720px;color:#787878">h: collapse  H: all</span>
<span class="m " style="left:641px;top:735px;color:#787878">g: start     G: end</span>
<span class="m " style="left:641px;top:750px;color:#787878">{: previous  }: next</span>
<span class="m " style="left:641px;top:765px;color:#787878">q: quit and print</span>
<span class="m hl" style="left:777px;top:765px;width:272px">Traceback (most recent call last):</span>
<span class="m hl" style="left:1049px;top:780px;width:368px">  File &quot;./summarize.py&quot;, line 753, in &lt;module&gt;</span>
<span class="m hl" style="left:1417px;top:795px;width:424px">    draw_infobox(gui, lookup[textbox.selected_index])</span>
<span class="m hl" style="left:1841px;top:810px;width:16px">  </span>
<span class="m hl" style="left:633px;top:825px;width:384px">File &quot;./summarize.py&quot;, line 718, in draw_infobox</span>
<span class="m hl" style="left:1017px;top:840px;width:608px">    (asm, raw) = disassemble(disassembler, processor.architecture, dis_data)</span>
<span class="m hl" style="left:1625px;top:855px;width:232px">  File &quot;./summarize.py&quot;, line</span>
<span class="m hl" style="left:633px;top:870px;width:160px"> 315, in disassemble</span>
<span class="m hl" style="left:793px;top:885px;width:208px">    stderr=subprocess.PIPE</span>
<span class="m hl" style="left:1001px;top:900px;width:512px">  File &quot;/usr/lib/python2.7/subprocess.py&quot;, line 711, in __init__</span>
<span class="m hl" style="left:1513px;top:915px;width:176px">    errread, errwrite)</span>
<span class="m hl" style="left:1689px;top:930px;width:168px">  File &quot;/usr/lib/pyth</span>
<span class="m hl" style="left:633px;top:945px;width:400px">on2.7/subprocess.py&quot;, line 1235, in _execute_child</span>
<span class="m hl" style="left:1033px;top:960px;width:192px">    self.pid = os.fork()</span>
<span class="m hl" style="left:1225px;top:975px;width:336px">OSError: [Errno 12] Cannot allocate memory</span>
</div></div>
<div id="panel"></div>
<div class="wb" style="left:181px"></div>
<div class="wb" style="left:344px"></div>
<div class="wb act" style="left:507px"></div>
<div class="wb" style="left:670px"></div>
<span class="t" style="left:28.80px;top:1177.00px;font-size:12.6px;color:#f6f6f6;font-weight:700;letter-spacing:-0.074px;text-shadow:0 1px 1px rgba(0,0,0,.8);">Menu</span>
<span class="t" style="left:203.70px;top:1176.00px;font-size:12.6px;color:#ececec;letter-spacing:0.142px;">[problem]</span>
<span class="t" style="left:366.50px;top:1176.00px;font-size:12.6px;color:#ececec;letter-spacing:-0.163px;">[Problem (Windows ...</span>
<span class="t" style="left:529.60px;top:1176.00px;font-size:12.6px;color:#f4f4f4;letter-spacing:0.004px;">mint@mint /media/...</span>
<span class="t" style="left:691.90px;top:1176.00px;font-size:12.6px;color:#ececec;letter-spacing:-0.002px;">System Monitor</span>
<span class="t" style="left:1866.40px;top:1177.00px;font-size:12.2px;color:#f4f4f4;font-weight:700;letter-spacing:-0.121px;">16:54</span>
<svg class="abs" style="left:0;top:1172px" width="1920" height="28" viewBox="0 1172 1920 28">
<defs>
<linearGradient id="fg" x1="0" y1="0" x2="0" y2="1"><stop offset="0" stop-color="#a5cc74"/><stop offset="1" stop-color="#79a649"/></linearGradient>
<linearGradient id="mg" x1="0" y1="0" x2="0" y2="1"><stop offset="0" stop-color="#b4dd7e"/><stop offset="1" stop-color="#7fb347"/></linearGradient>
<radialGradient id="ffg" cx=".45" cy=".4" r=".6"><stop offset="0" stop-color="#5aa7e8"/><stop offset="1" stop-color="#1b4f9a"/></radialGradient>
</defs>
<!-- mint logo -->
<path d="M4.6,1178.8 H18.2 Q23.4,1178.8 23.4,1184 V1195.3 H12.4 Q7.2,1195.3 7.2,1190.2 V1184 H4.6 Z" fill="url(#mg)" stroke="#fbfdf8" stroke-width="1.7" stroke-linejoin="round"/>
<path d="M10.1,1181.6 V1189.6 Q10.1,1192.7 13.2,1192.7 H17.8 Q20.9,1192.7 20.9,1189.6 V1185.6 M13.1,1190.3 V1186.6 Q13.1,1185.4 14.25,1185.4 Q15.4,1185.4 15.4,1186.6 V1190.3 M15.4,1186.6 Q15.4,1185.4 16.6,1185.4 Q17.8,1185.4 17.8,1186.6 V1190.3" fill="none" stroke="#ffffff" stroke-width="1.3" stroke-linecap="round"/>
<!-- show desktop -->
<rect x="73" y="1178.6" width="20.4" height="17" fill="url(#fg)"/>
<rect x="73" y="1178.6" width="20.4" height="2.4" fill="#e9eee3"/>
<rect x="73" y="1181" width="20.4" height=".8" fill="#6d8d4b"/>
<rect x="76.6" y="1191.4" width="13.2" height="4.2" fill="#4a6b2e"/>
<rect x="73" y="1195.2" width="20.4" height=".8" fill="#d7e3c9"/>
<!-- firefox -->
<circle cx="115.2" cy="1187" r="8.2" fill="url(#ffg)"/>
<path d="M106.2,1184.5 Q105.6,1190.8 109.6,1194.2 Q114,1197.4 119.4,1195.2 Q124,1192.6 124,1186.5 Q123.6,1182.2 121,1180.2 Q122.4,1183.2 121.6,1185.6 Q120.6,1183.4 118.6,1183 Q120.4,1186.4 118.4,1189.2 Q116,1191.8 112.6,1190.6 Q110.2,1189.4 110.4,1187 Q111.6,1188 113.2,1187.2 Q111.4,1186 111.6,1184 Q110.4,1183.4 109.8,1182 Q108,1182 106.2,1184.5 Z" fill="#e8731a"/>
<path d="M106.6,1186 Q106.4,1191 110,1194 Q114,1197 119,1195 Q114.5,1195.4 111.6,1192.6 Q108.6,1189.6 109.4,1185.4 Z" fill="#f5b32a"/>
<path d="M121,1180.2 Q123.8,1183 124,1186.5 Q123.8,1191 121,1193.6 Q122.8,1189.4 121.6,1185.6 Q122.2,1183 121,1180.2Z" fill="#f7c21f"/>
<!-- terminal launcher -->
<rect x="130.6" y="1178.6" width="16.8" height="16.8" rx="1.6" fill="#15121a" stroke="#d9d9d9" stroke-width="1.3"/>
<path d="M134.2,1184.2 L137.2,1186 L134.2,1187.8 M138.4,1188.8 H142" fill="none" stroke="#e6e6e6" stroke-width="1.1"/>
<!-- folder launcher -->
<path d="M153.8,1180 H160.6 L162,1181.6 H172 V1195 H153.8 Z" fill="#e4e9dd"/>
<rect x="153.8" y="1182.6" width="18.4" height="12.6" fill="url(#fg)"/>
<rect x="153.8" y="1182.6" width="18.4" height=".8" fill="#c0dc9c"/>
<!-- window list icons -->
<path d="M185,1179.6 H190.6 L191.8,1181 H199 V1193.2 H185 Z" fill="#e4e9dd"/>
<rect x="185" y="1181.8" width="14" height="11.6" fill="url(#fg)"/>
<rect x="185" y="1181.8" width="14" height=".8" fill="#c0dc9c"/>
<!-- notepad icon -->
<rect x="347.6" y="1178.8" width="14.6" height="14.8" rx="1" fill="#f1f1ee" stroke="#b9b9b4" stroke-width=".8"/>
<path d="M349.8,1182.4 H359.6 M349.8,1184.6 H359.6 M349.8,1186.8 H359.6 M349.8,1189 H359.6 M349.8,1191.2 H357" stroke="#6f7fb0" stroke-width=".8"/>
<path d="M349.4,1179.8 H360.6" stroke="#555" stroke-width="1" stroke-dasharray="1,1"/>
<path d="M359.8,1179.6 L356,1190.4 L355.4,1192.6 L357.4,1191 L361.4,1180.2 Z" fill="#f0a12a" stroke="#b86f12" stroke-width=".5"/>
<circle cx="360.7" cy="1179.6" r="1.1" fill="#e0483a"/>
<!-- terminal window icon -->
<rect x="511.6" y="1179.2" width="13.8" height="13.8" rx="1.6" fill="#17131d" stroke="#cfcfcf" stroke-width="1.2"/>
<path d="M514.4,1183.8 L517,1185.4 L514.4,1187 M518,1188 H521.2" fill="none" stroke="#ececec" stroke-width="1.1"/>
<!-- sysmon icon -->
<rect x="674.6" y="1179.2" width="13.2" height="13.8" rx="1.6" fill="#3a2e10" stroke="#cfcfcf" stroke-width="1.2"/>
<path d="M676.6,1187.6 H678.6 L679.8,1183 L681.4,1190.6 L682.8,1185.6 L683.8,1188 H686" fill="none" stroke="#f2b822" stroke-width="1.1" stroke-linejoin="round"/>
<!-- tray: disk -->
<rect x="1807.7" y="1180.7" width="11" height="12.6" rx="1.6" fill="none" stroke="#d4d4d4" stroke-width="1.4"/>
<circle cx="1812.8" cy="1186.4" r="3.5" fill="#d4d4d4"/>
<circle cx="1812.9" cy="1186.5" r="1.1" fill="#3a3a3a"/>
<path d="M1813,1186.6 L1816.2,1190.8" stroke="#3a3a3a" stroke-width="1.8"/>
<path d="M1813.2,1186.8 L1815.8,1190.4" stroke="#d4d4d4" stroke-width=".9"/>
<!-- tray: user -->
<path d="M1833.1,1180.7 Q1837,1180.7 1837,1185 Q1837,1188 1835.4,1189.4 Q1835.4,1191 1837.4,1191.8 Q1840,1192.6 1840.2,1194.2 H1826 Q1826.2,1192.6 1828.8,1191.8 Q1830.8,1191 1830.8,1189.4 Q1829.2,1188 1829.2,1185 Q1829.2,1180.7 1833.1,1180.7 Z" fill="#d6d6d6"/>
<!-- tray: network plug -->
<path d="M1846.4,1193.6 L1850,1190 M1856.4,1183.6 L1860,1180" stroke="#d4d4d4" stroke-width="1.3"/>
<path d="M1849.6,1190.4 L1851.7,1188.3 M1854.5,1185.5 L1856.6,1183.4" stroke="#d4d4d4" stroke-width="3.6" stroke-linecap="round"/>
<!-- tray: volume -->
<g opacity=".55"><path d="M1903,1184.6 H1905.4 L1908.2,1181.8 V1192.4 L1905.4,1189.6 H1903 Z" fill="#c8c8c8"/>
<path d="M1910,1184.4 Q1911.4,1187 1910,1189.8 M1912,1182.6 Q1914.4,1187 1912,1191.6 M1914.2,1180.8 Q1917.6,1187 1914.2,1193.4" fill="none" stroke="#bdbdbd" stroke-width="1"/></g>
</svg>
</body></html>
